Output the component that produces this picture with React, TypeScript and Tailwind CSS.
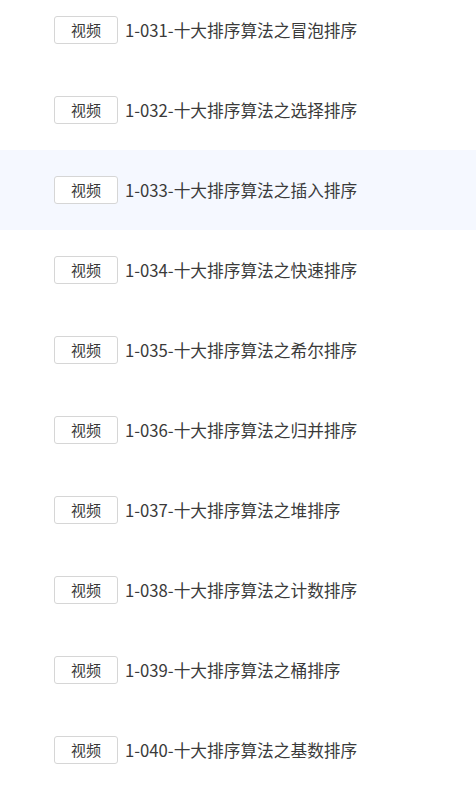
const lessons = [
  { id: '1-031', title: '十大排序算法之冒泡排序' },
  { id: '1-032', title: '十大排序算法之选择排序' },
  { id: '1-033', title: '十大排序算法之插入排序', active: true },
  { id: '1-034', title: '十大排序算法之快速排序' },
  { id: '1-035', title: '十大排序算法之希尔排序' },
  { id: '1-036', title: '十大排序算法之归并排序' },
  { id: '1-037', title: '十大排序算法之堆排序' },
  { id: '1-038', title: '十大排序算法之计数排序' },
  { id: '1-039', title: '十大排序算法之桶排序' },
  { id: '1-040', title: '十大排序算法之基数排序' },
];

export default function App() {
  return (
    <div
      className="w-[476px] h-[792px] overflow-hidden bg-white"
      style={{ fontFamily: '"Noto Sans CJK SC", "Noto Sans", sans-serif' }}
    >
      <ul className="-mt-[10px]">
        {lessons.map((item) => (
          <li
            key={item.id}
            className={`flex items-center h-[80px] pl-[54px] ${item.active ? 'bg-[#f5f8ff]' : ''}`}
          >
            <span className="flex items-center justify-center w-[64px] h-[28px] border border-[#d6d6d6] rounded-[3px] bg-white text-[15px] text-[#3a3a3a] font-normal">
              视频
            </span>
            <span className="ml-[7px] text-[16.7px] text-[#3a3a3a] leading-none font-normal">
              {item.id}-{item.title}
            </span>
          </li>
        ))}
      </ul>
    </div>
  );
}
